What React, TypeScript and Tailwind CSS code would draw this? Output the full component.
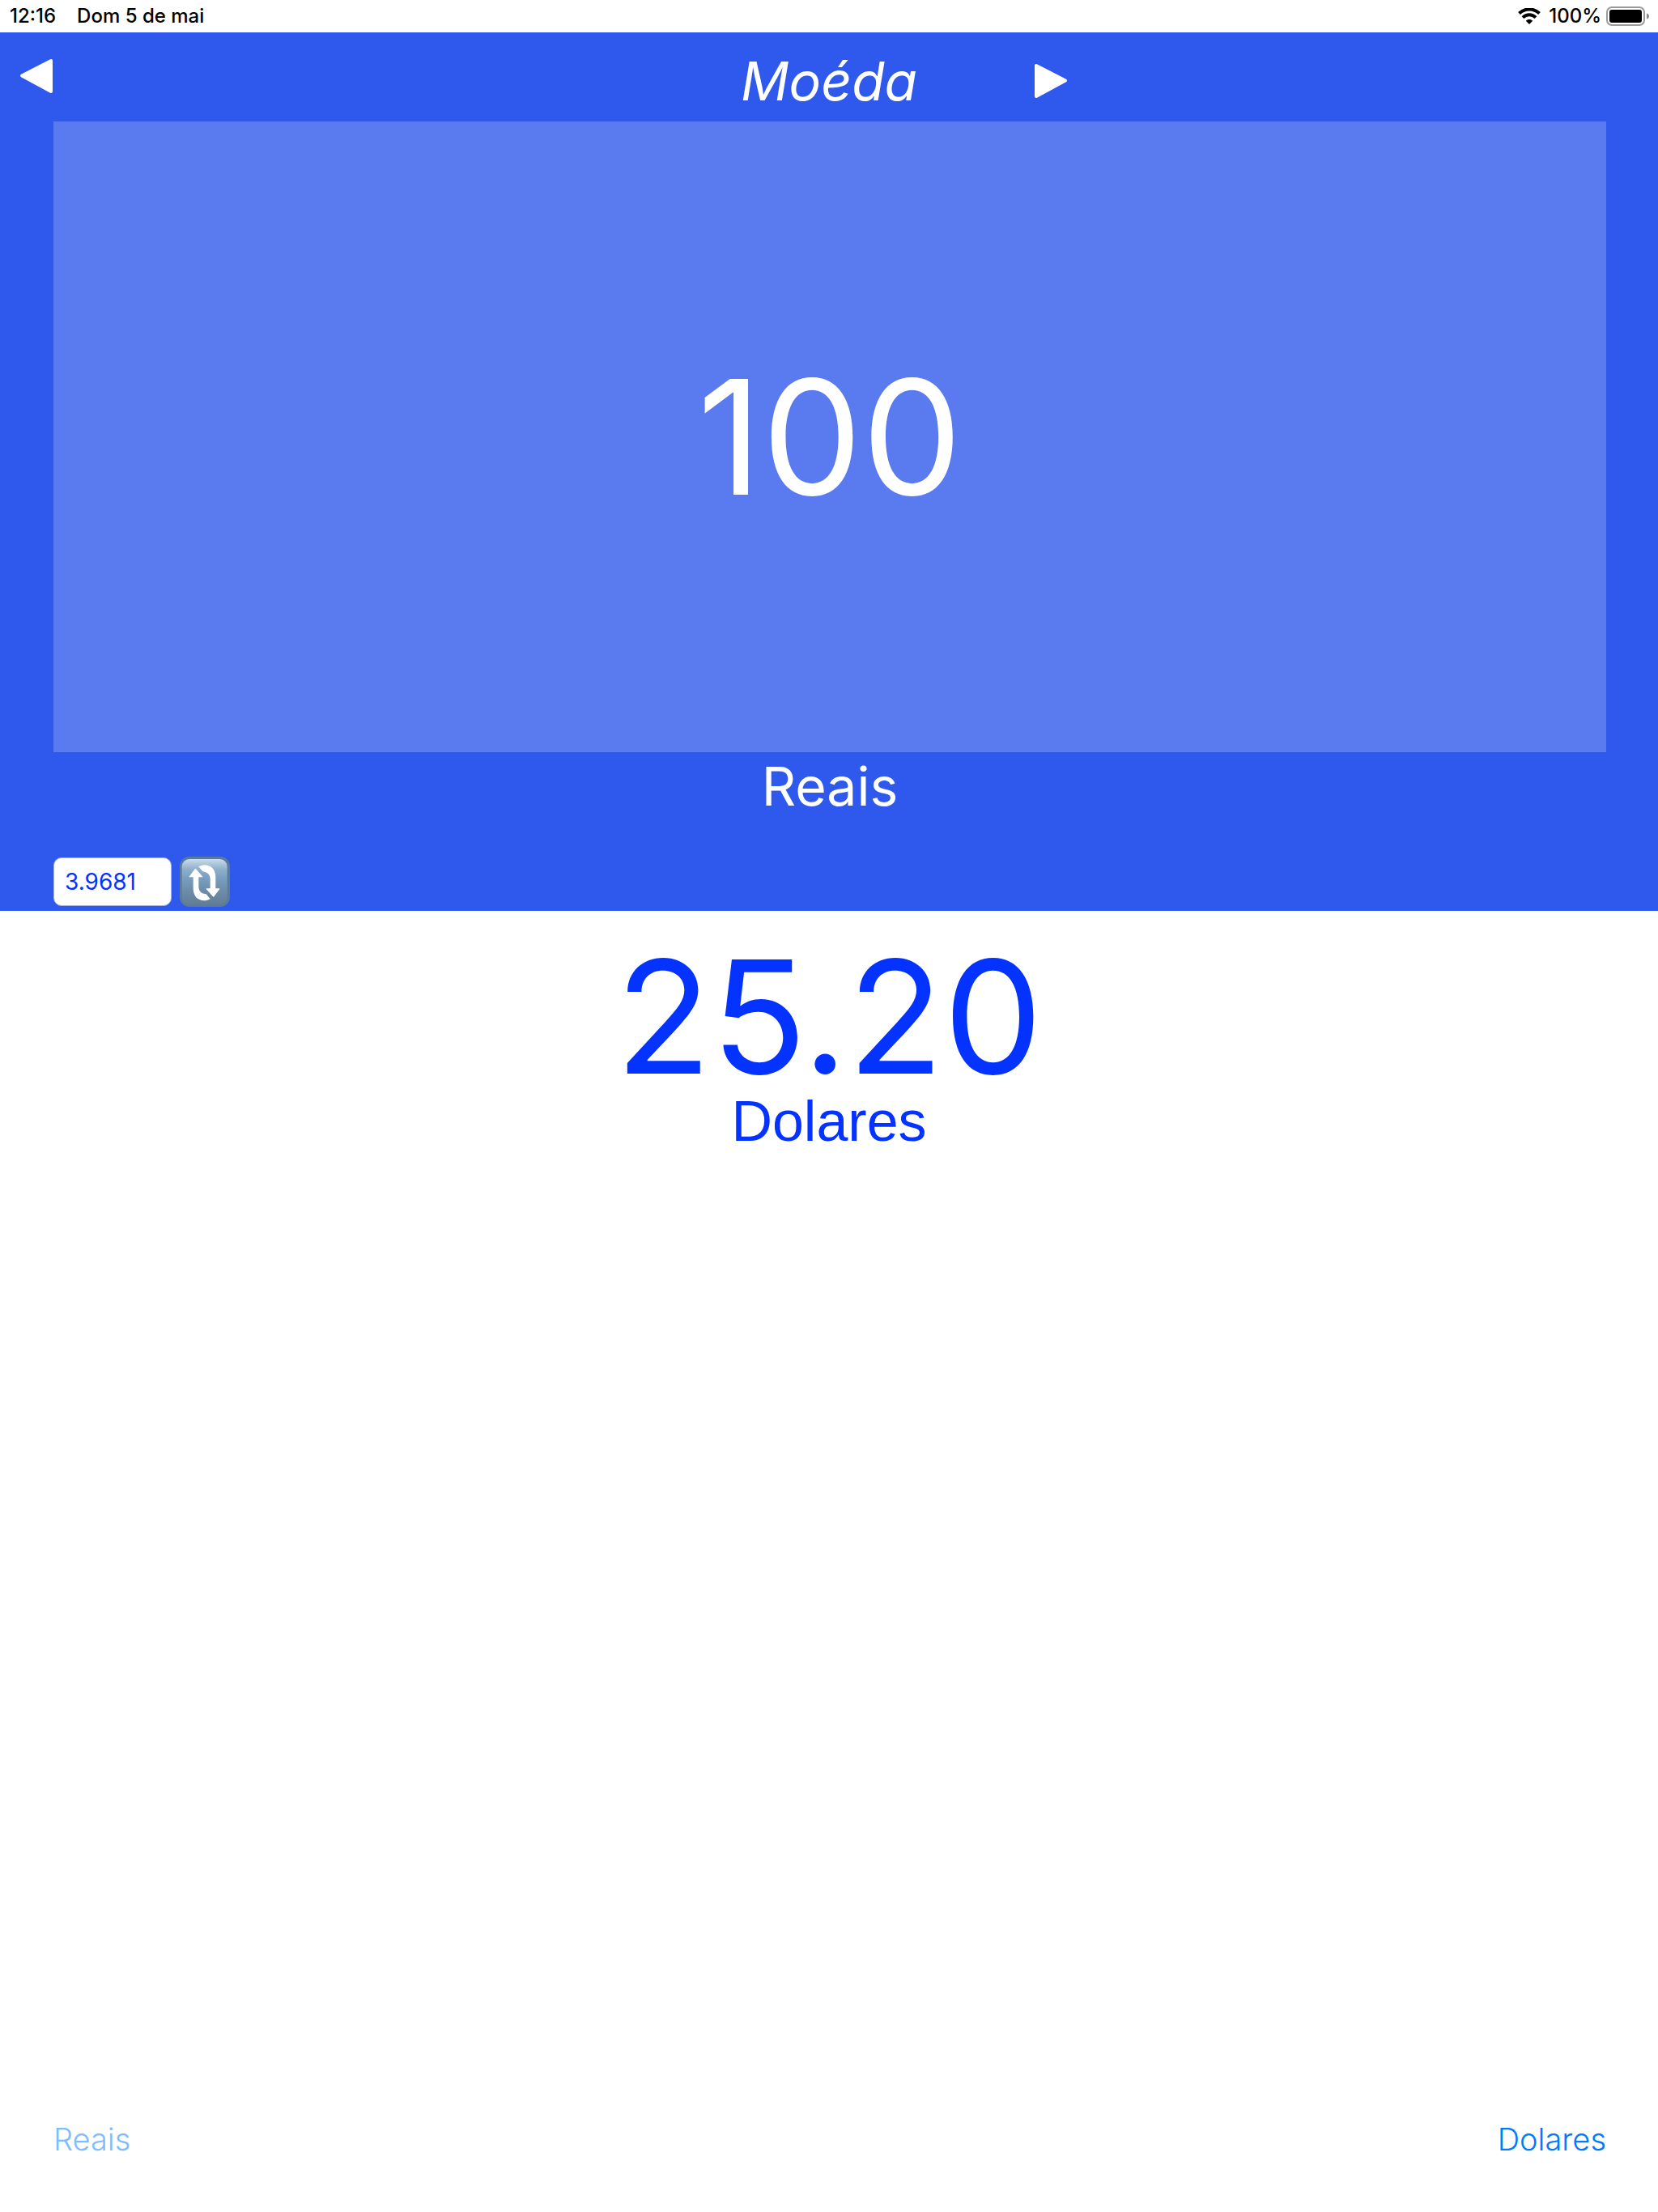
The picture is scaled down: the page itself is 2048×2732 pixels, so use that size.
import { useState } from "react";

function StatusBar() {
  return (
    <header className="flex h-10 items-center bg-white pl-3 pr-2.5 text-2xl leading-10 font-medium text-black">
      <span>12:16</span>
      <span className="ml-6.5">Dom 5 de mai</span>
      <span className="ml-auto flex items-center">
        <svg width="28" height="20" viewBox="0 0 28 20" role="img" aria-label="Wi-Fi">
          <path d="M1.5 6.5C8.5 -.3 19.500 -.3 26.500 6.500" fill="none" stroke="#000" strokeWidth="4" />
          <path d="M6 11.600C10.600 7.200 17.400 7.200 22 11.600" fill="none" stroke="#000" strokeWidth="4" />
          <path d="M14 20L9.800 15.800C12 13.400 16 13.400 18.200 15.800Z" />
        </svg>
        <span className="ml-2.5">100%</span>
        <svg className="ml-1.5" width="54" height="24" viewBox="0 0 54 24" role="img" aria-label="Bateria">
          <rect x="1" y="1" width="46" height="22" rx="6" fill="none" stroke="#9b9b9b" strokeWidth="2" />
          <rect x="4" y="4" width="40" height="16" rx="3" />
          <path d="M50 8.500C52 9 53 10.500 53 12S52 15 50 15.500Z" fill="#8c8c8c" />
        </svg>
      </span>
    </header>
  );
}

function RefreshIcon() {
  const arrow =
    "M35 74L56 46Q58 43 60 46L85 74Q86 76 83 76H70V113Q71 136 98 139L113 157Q102 163 90 163Q53 161 50 121V76H37Q34 76 35 74Z";
  return (
    <svg className="size-[62px]" viewBox="0 0 186 186" aria-hidden="true">
      <defs>
        <linearGradient id="face" x1="0" y1="0" x2="0" y2="1">
          <stop offset="0" stopColor="#c9dcea" />
          <stop offset="0.22" stopColor="#8fb0cc" />
          <stop offset="0.4" stopColor="#7a9fc0" />
          <stop offset="0.65" stopColor="#6f8fac" />
          <stop offset="1" stopColor="#627d95" />
        </linearGradient>
      </defs>
      <rect width="186" height="186" rx="36" fill="#5b7b9b" />
      <rect x="8" y="9" width="168" height="170" rx="28" fill="url(#face)" />
      <g fill="#fff">
        <path d={arrow} />
        <path d={arrow} transform="rotate(180 91.500 97)" />
      </g>
    </svg>
  );
}

export default function App() {
  const [amount, setAmount] = useState("100");
  const [rate, setRate] = useState("3.9681");

  return (
    <div className="flex min-h-screen flex-col bg-white font-['Inter',sans-serif]">
      <StatusBar />
      <section className="flex flex-col bg-[#2f58ec] pb-[5px] text-white">
        <div className="grid h-[110px] grid-cols-[1fr_auto_1fr] items-start">
          <button type="button" aria-label="Anterior" className="mt-8 ml-6 justify-self-start">
            <svg className="block" width="42" height="44" viewBox="0 0 42 44">
              <path d="M3 21.500L39 3V41Z" fill="#fff" stroke="#fff" strokeWidth="4" strokeLinejoin="round" />
            </svg>
          </button>
          <h1 className="mt-3 text-[66px] leading-[96px] italic">Moéda</h1>
          <button type="button" aria-label="Próximo" className="mt-[38px] ml-36 justify-self-start">
            <svg className="block" width="42" height="44" viewBox="0 0 42 44">
              <path d="M39 21.500L3 3V41Z" fill="#fff" stroke="#fff" strokeWidth="4" strokeLinejoin="round" />
            </svg>
          </button>
        </div>
        <div className="flex flex-col pr-16 pl-[66px]">
          <input
            id="amount"
            value={amount}
            onChange={(e) => setAmount(e.target.value)}
            className="h-[779px] w-full bg-[#5a7af0] text-center text-[196px]"
          />
          <label htmlFor="amount" className="text-center text-[66px] leading-[85px]">
            Reais
          </label>
        </div>
        <div className="mt-11 flex items-center gap-[10px] px-[66px]">
          <input
            aria-label="Cotação"
            value={rate}
            onChange={(e) => setRate(e.target.value)}
            className="h-[60px] w-[146px] rounded-[10px] border border-[#a9b4d8] bg-white px-[13px] text-[28px] text-[#0433ff]"
          />
          <button type="button" aria-label="Atualizar">
            <RefreshIcon />
          </button>
        </div>
      </section>
      <main className="flex flex-1 flex-col items-center text-[#0433ff]">
        <output htmlFor="amount" className="mt-10 text-[194px] leading-[182px]">
          25.20
        </output>
        <p className="font-['Liberation_Sans',sans-serif] text-[70px] leading-[76px]">Dolares</p>
      </main>
      <footer className="flex justify-between pr-16 pb-16 pl-[66px] text-[38px] leading-[52px] font-light">
        <button type="button" disabled className="text-[#80bdff]">
          Reais
        </button>
        <button type="button" className="text-[#007aff]">
          Dolares
        </button>
      </footer>
    </div>
  );
}
